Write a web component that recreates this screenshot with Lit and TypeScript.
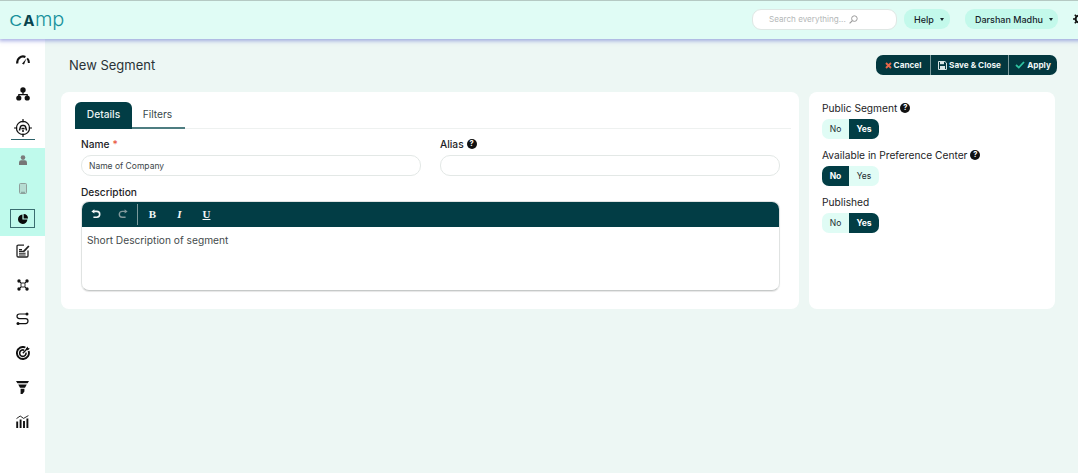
import { LitElement, html, css } from "lit";
import { customElement } from "lit/decorators.js";

const I = {
  gauge: html`<svg width="14" height="10" viewBox="0 0 14 10" fill="none"><path d="M1.4 8.6A5.8 5.8 0 0 1 9.4 2" stroke="#111" stroke-width="2.2"/><path d="M11.2 3.4A5.8 5.8 0 0 1 12.8 8" stroke="#111" stroke-width="2"/><path d="M6 8.8 10.4 3.4 8 9.6Z" fill="#111"/></svg>`,
  org: html`<svg width="14" height="14" viewBox="0 0 14 14"><path d="M7 4v4M2.8 10V7.6h8.4V10" fill="none" stroke="#111" stroke-width="1.2"/><circle cx="7" cy="3" r="2.7" fill="#111"/><circle cx="2.8" cy="11" r="2.6" fill="#111"/><circle cx="11.2" cy="11" r="2.6" fill="#111"/></svg>`,
  target: html`<svg width="18" height="18" viewBox="0 0 18 18" fill="none" stroke="#111"><circle cx="9" cy="9" r="6.6" stroke-width="1.2"/><path d="M9 0v3.4M9 14.6V18M0 9h3.4M14.6 9H18" stroke-width="1.2"/><path d="M5.4 11.4 6.6 7.6q.4-1.2 1.4-1.2h2q1 0 1.4 1.2l1.2 3.8" stroke-width="1.5"/><path d="M7.4 9.6h3.2" stroke-width="1.6"/><circle cx="9" cy="12" r="1" fill="#111" stroke="none"/></svg>`,
  user: html`<svg width="8" height="10" viewBox="0 0 8 10"><circle cx="4" cy="2.6" r="2.3" fill="#7c7c7c"/><path d="M0 10V7.6Q0 5.2 2.2 5.2h3.6Q8 5.2 8 7.6V10Z" fill="#767676"/></svg>`,
  tablet: html`<svg width="8" height="11" viewBox="0 0 8 11"><rect x=".5" y=".5" width="7" height="10" rx="1" fill="#b6dcd2" stroke="#8f9f9b"/><path d="M2 9.3h4" stroke="#7f9a94"/></svg>`,
  pie: html`<svg width="10" height="10" viewBox="0 0 10 10"><path d="M4.4.6v5h5A4.7 4.7 0 1 1 4.4.6Z" fill="#0a0a0a"/><path d="M5.6 0A4.6 4.6 0 0 1 10 4.4H5.6Z" fill="#0a0a0a"/></svg>`,
  form: html`<svg width="14" height="14" viewBox="0 0 14 14" fill="none"><path d="M8 1.2H2.2Q1 1.2 1 2.4v9.4q0 1.2 1.2 1.2h8.6q1.2 0 1.2-1.2V6.5" stroke="#222" stroke-width="1.3"/><path d="M3 7.4h5M3 9.2h6.6M3 11h6.6M3 5.6h3" stroke="#222" stroke-width="1.1"/><path d="M7.4 6.6 12.2 1.4l1.3 1.2L8.7 7.8 7 8.2Z" fill="#222"/></svg>`,
  net: html`<svg width="12" height="12" viewBox="0 0 12 12"><path d="M2 2 10 10M10 2 2 10" stroke="#111" stroke-width="1"/><rect x="4" y="4" width="4" height="4" fill="#fff" stroke="#111" stroke-width=".9"/><circle cx="2" cy="2" r="1.7" fill="#111"/><circle cx="10" cy="2" r="1.7" fill="#111"/><circle cx="2" cy="10" r="1.7" fill="#111"/><circle cx="10" cy="10" r="1.7" fill="#111"/></svg>`,
  route: html`<svg width="13" height="14" viewBox="0 0 13 14" fill="none"><path d="M11 2H3.4Q1 2 1 4.2T3.4 6.6h6.2q2.4 0 2.4 2.4t-2.4 2.6H2" stroke="#111" stroke-width="1.2"/><circle cx="11" cy="2" r="1.5" fill="#111"/><circle cx="2" cy="11.6" r="1.5" fill="#111"/></svg>`,
  goal: html`<svg width="14" height="14" viewBox="0 0 14 14" fill="none"><path d="M9.4 1.5A6 6 0 1 0 12.6 5" stroke="#111" stroke-width="1.9"/><path d="M8.1 4.2A3.2 3.2 0 1 0 10 6.6" stroke="#111" stroke-width="1.6"/><path d="M6.8 7.3 11.4 2.6" stroke="#111" stroke-width="1.4"/><path d="M10 2.6 11.6.4l.5 1.6 1.7.4L11.8 4.5Z" fill="#111"/></svg>`,
  funnel: html`<svg width="13" height="13" viewBox="0 0 13 13"><path d="M0 0h13L11.6 2.2H1.4ZM2.2 3.4h8.6L9 6.8H4ZM4.6 7.8h3.8v2.6L6.5 13 4.6 13Z" fill="#111"/></svg>`,
  bars: html`<svg width="13" height="13" viewBox="0 0 13 13" fill="none"><path d="M.5 3.6 4.2 1l3.4 2.4L12.4.6" stroke="#111" stroke-width=".9"/><path d="M1.2 6.4V13M4.6 4.6V13M8 6V13M11.4 3.6V13" stroke="#111" stroke-width="1.9"/></svg>`,
  undo: html`<svg width="10" height="10" viewBox="0 0 10 10" fill="none"><path d="M2.6 2.4h3.2a2.9 2.9 0 0 1 0 5.8H2.4" stroke="currentColor" stroke-width="1.6"/><path d="M3.4.2v4.4L.4 2.4Z" fill="currentColor"/></svg>`,
  redo: html`<svg width="10" height="10" viewBox="0 0 10 10" fill="none"><path d="M7.4 2.4H4.2a2.9 2.9 0 0 0 0 5.8h3.4" stroke="currentColor" stroke-width="1.4"/><path d="M6.6.2v4.4l3-2.2Z" fill="currentColor"/></svg>`,
  x: html`<svg width="7" height="7" viewBox="0 0 7 7"><path d="M1 1 6 6M6 1 1 6" stroke="#e8674a" stroke-width="1.9"/></svg>`,
  save: html`<svg width="9" height="9" viewBox="0 0 9 9"><path d="M.5.5h6.4L8.5 2v6.5h-8Z" fill="none" stroke="#d9e5e5"/><rect x="2" y="1" width="4" height="2.2" fill="#d9e5e5"/><rect x="2" y="5" width="5" height="3" fill="#d9e5e5"/></svg>`,
  check: html`<svg width="10" height="8" viewBox="0 0 10 8"><path d="M1 4 3.8 6.6 9 1" fill="none" stroke="#2fc4a2" stroke-width="1.8"/></svg>`,
  search: html`<svg width="9" height="9" viewBox="0 0 9 9" fill="none"><circle cx="5.4" cy="3.6" r="2.8" stroke="#9b9b9b"/><path d="M3.4 5.6.6 8.4" stroke="#9b9b9b" stroke-width="1.2"/></svg>`,
  gear: html`<svg width="12" height="12" viewBox="0 0 12 12" fill="none"><circle cx="6" cy="6" r="3.4" stroke="#111" stroke-width="2"/><path d="M6 0v2.4M6 9.6V12M0 6h2.4M9.6 6H12M1.8 1.8l1.7 1.7M8.5 8.5l1.7 1.7M10.2 1.8 8.5 3.5M3.5 8.5l-1.7 1.7" stroke="#111" stroke-width="1.6"/></svg>`,
};

@customElement("app-root")
export class AppRoot extends LitElement {
  static styles = css`
    :host {
      display: block;
      width: 1078px;
      height: 473px;
      overflow: hidden;
      font-family: Inter, "Liberation Sans", sans-serif;
      color: #1d2326;
      background: #edf7f4;
    }
    * { box-sizing: border-box; }
    .top {
      position: relative;
      z-index: 2;
      height: 39px;
      display: flex;
      align-items: center;
      background: #e0fcf5;
      border-top: 1px solid #b5c9c3;
      box-shadow: 0 1px 4px 1px rgba(96, 108, 205, 0.55);
      padding: 0 0 2px 9px;
      width: 1090px;
    }
    .logo {
      font-size: 20px;
      font-weight: 300;
      color: #17919c;
      line-height: 1;
      margin-top: -1px;
      width: 743px;
      display: flex;
      align-items: baseline;
    }
    .logo .c { display: inline-block; transform: scaleX(1.2); transform-origin: left; margin-right: 3px; }
    .logo b { color: #07434d; font-weight: 700; font-size: 15px; margin-right: 0.5px; }
    .search {
      width: 145px;
      height: 21px;
      background: #fff;
      border: 1px solid #dfe7e4;
      border-radius: 9px;
      display: flex;
      align-items: center;
      gap: 3px;
      padding-left: 16px;
      font-size: 8.1px;
      color: #b4b8b8;
    }
    .pill {
      height: 20px;
      border-radius: 9px;
      background: #c3f9eb;
      display: flex;
      align-items: center;
      font-size: 9px;
      font-weight: 500;
      color: #16242a;
    }
    .help { width: 46px; margin-left: 7px; padding-left: 10px; gap: 6px; }
    .user { width: 93px; margin-left: 15px; padding-left: 10px; gap: 6px; }
    .caret {
      width: 0;
      height: 0;
      border-left: 2.5px solid transparent;
      border-right: 2.5px solid transparent;
      border-top: 3px solid #16242a;
    }
    .gear { margin-left: 15px; display: flex; }

    .body { display: flex; height: 434px; }
    .side {
      width: 45px;
      flex: none;
      background: #fff;
      padding-top: 3px;
      display: flex;
      flex-direction: column;
    }
    .ico {
      height: 34px;
      display: flex;
      align-items: center;
      justify-content: center;
      flex: none;
    }
    .ico.first { height: 35px; }
    .under { height: 36px; align-items: flex-start; padding-top: 8px; }
    .under-wrap {
      display: flex;
      flex-direction: column;
      align-items: center;
      gap: 2px;
    }
    .line { width: 24px; height: 1px; background: #2c6168; }
    .sub {
      background: #bffaec;
      height: 88px;
      margin-top: 1px;
      display: flex;
      flex-direction: column;
      align-items: center;
      flex: none;
    }
    .sub-i { height: 24px; display: flex; align-items: center; justify-content: center; flex: none; }
    .sub-i.t { height: 33px; }
    .sub-box {
      margin-top: 4px;
      width: 25px;
      height: 19px;
      border: 1px solid #3a6d70;
      display: flex;
      align-items: center;
      justify-content: center;
      flex: none;
    }
    .rest { margin-top: -2px; display: flex; flex-direction: column; }

    .main { flex: 1; padding: 16px 21px 0 16px; min-width: 0; }
    .head {
      display: flex;
      justify-content: space-between;
      align-items: center;
      height: 20px;
      padding-left: 8px;
      margin-bottom: 17px;
    }
    h1 { margin: -1px 0 0; font-size: 13px; font-weight: 400; color: #2a3236; }
    .btns {
      display: flex;
      height: 20px;
      border-radius: 7px;
      overflow: hidden;
      background: #03383f;
      color: #eef5f5;
      font-size: 8.2px;
      font-weight: 700;
    }
    .btn {
      display: flex;
      align-items: center;
      justify-content: center;
      gap: 2px;
      border-left: 1px solid #7b9a9c;
      white-space: nowrap;
    }
    .btn:first-child { border-left: 0; }
    .c1 { width: 54px; }
    .c2 { width: 78px; }
    .c3 { width: 49px; }

    .cols { display: flex; gap: 10px; }
    .card { background: #fff; border-radius: 8px; height: 217px; }
    .left { width: 738px; padding: 10px 8px 0 14px; flex: none; }
    .right { width: 246px; padding: 8px 13px 0; flex: none; }

    .tabs { display: flex; height: 27px; border-bottom: 1px solid #eef1f0; font-size: 10.2px; }
    .tab {
      height: 27px;
      display: flex;
      align-items: center;
      justify-content: center;
    }
    .tab.on {
      width: 57px;
      background: #023d45;
      color: #eaf3f3;
      font-weight: 500;
      border-radius: 6px 6px 0 0;
      padding-bottom: 3px;
    }
    .tab.off {
      width: 53px;
      color: #37474b;
      border-bottom: 2px solid #4e7d81;
      padding: 0 2px 2px 0;
    }
    .row { display: flex; gap: 19px; padding: 0 11px 0 6px; margin-top: 8px; }
    .field { flex: 1; min-width: 0; }
    .lab {
      font-size: 10.2px;
      font-weight: 500;
      height: 18px;
      padding-bottom: 5px;
      display: flex;
      align-items: center;
      gap: 3px;
      color: #1d2326;
    }
    .req { color: #ea5b45; }
    .q {
      width: 10px;
      height: 10px;
      border-radius: 50%;
      background: #111;
      color: #fff;
      font-size: 7.5px;
      font-weight: 700;
      display: inline-flex;
      align-items: center;
      justify-content: center;
      line-height: 1;
    }
    .inp {
      height: 21px;
      border: 1px solid #e3e8e6;
      border-radius: 10px;
      padding-left: 7px;
      font-size: 8.5px;
      color: #3b4548;
      display: flex;
      align-items: center;
    }
    .dl { margin: 7px 11px 0 6px; height: 18px; padding-bottom: 0; }
    .editor {
      margin: 0 11px 0 6px;
      height: 90px;
      border-radius: 8px;
      border: 1px solid #e0e3e2;
      border-bottom: 1px solid #c6c9c8;
      box-shadow: 0 1px 1px rgba(0, 0, 0, 0.1);
      overflow: hidden;
    }
    .bar {
      margin: -1px -1px 0;
      height: 26px;
      background: #023d45;
      display: flex;
      align-items: center;
      color: #fff;
      font-family: "Liberation Serif", serif;
      font-size: 11px;
      font-weight: 700;
      padding-left: 1px;
    }
    .tool { width: 27px; display: flex; align-items: center; justify-content: center; color: #f3f7f7; flex: none; }
    .tool.dim { color: #83999c; }
    .sep { width: 1px; height: 21px; background: #7b9a9c; margin: 0 1px; flex: none; }
    .u { text-decoration: underline; }
    .it { font-style: italic; }
    .txt {
      padding: 7px 5px;
      font-size: 10.2px;
      color: #444a4c;
      line-height: 12px;
    }

    .rlab { font-size: 10.2px; height: 15px; display: flex; align-items: center; gap: 3px; color: #1d2326; }
    .tog {
      display: flex;
      width: 57px;
      height: 20px;
      margin: 4px 0 8px;
      border-radius: 7px;
      overflow: hidden;
      font-size: 8.5px;
      background: #e0fcf5;
      color: #1d2c30;
    }
    .tog span { display: flex; align-items: center; justify-content: center; }
    .tog span:first-child { width: 27px; }
    .tog span:last-child { width: 30px; }
    .tog .act { background: #023d45; color: #fff; font-weight: 700; }
  `;

  private tog(yes: boolean) {
    return html`<div class="tog">
      <span class="${yes ? "" : "act"}">No</span>
      <span class="${yes ? "act" : ""}">Yes</span>
    </div>`;
  }

  render() {
    return html`
      <div class="top">
        <div class="logo"><span class="c">c</span><b>A</b>mp</div>
        <div class="search">Search everything... ${I.search}</div>
        <div class="pill help">Help <i class="caret"></i></div>
        <div class="pill user">Darshan Madhu <i class="caret"></i></div>
        <div class="gear">${I.gear}</div>
      </div>
      <div class="body">
        <div class="side">
          <div class="ico first">${I.gauge}</div>
          <div class="ico">${I.org}</div>
          <div class="ico under">
            <div class="under-wrap">${I.target}<div class="line"></div></div>
          </div>
          <div class="sub">
            <div class="sub-i">${I.user}</div>
            <div class="sub-i t">${I.tablet}</div>
            <div class="sub-box">${I.pie}</div>
          </div>
          <div class="rest">
            <div class="ico">${I.form}</div>
            <div class="ico">${I.net}</div>
            <div class="ico">${I.route}</div>
            <div class="ico">${I.goal}</div>
            <div class="ico">${I.funnel}</div>
            <div class="ico">${I.bars}</div>
          </div>
        </div>
        <div class="main">
          <div class="head">
            <h1>New Segment</h1>
            <div class="btns">
              <div class="btn c1">${I.x} Cancel</div>
              <div class="btn c2">${I.save} Save &amp; Close</div>
              <div class="btn c3">${I.check} Apply</div>
            </div>
          </div>
          <div class="cols">
            <div class="card left">
              <div class="tabs">
                <div class="tab on">Details</div>
                <div class="tab off">Filters</div>
              </div>
              <div class="row">
                <div class="field">
                  <div class="lab">Name <span class="req">*</span></div>
                  <div class="inp">Name of Company</div>
                </div>
                <div class="field">
                  <div class="lab">Alias <span class="q">?</span></div>
                  <div class="inp"></div>
                </div>
              </div>
              <div class="lab dl">Description</div>
              <div class="editor">
                <div class="bar">
                  <div class="tool">${I.undo}</div>
                  <div class="tool dim">${I.redo}</div>
                  <div class="sep"></div>
                  <div class="tool">B</div>
                  <div class="tool it">I</div>
                  <div class="tool u">U</div>
                </div>
                <div class="txt">Short Description of segment</div>
              </div>
            </div>
            <div class="card right">
              <div class="rlab">Public Segment <span class="q">?</span></div>
              ${this.tog(true)}
              <div class="rlab">Available in Preference Center <span class="q">?</span></div>
              ${this.tog(false)}
              <div class="rlab">Published</div>
              ${this.tog(true)}
            </div>
          </div>
        </div>
      </div>
    `;
  }
}
